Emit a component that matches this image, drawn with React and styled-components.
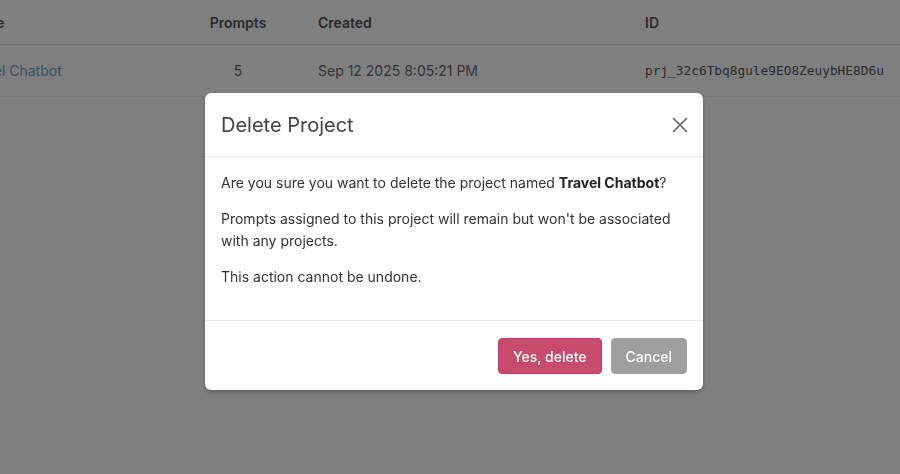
import React from "react";
import styled, { createGlobalStyle } from "styled-components";

const Global = createGlobalStyle`
  html, body { margin: 0; padding: 0; background: #fff; }
  body { font-family: Inter, "Noto Sans", sans-serif; overflow: hidden; }
`;

const Page = styled.div`
  width: 900px;
  height: 474px;
  overflow: hidden;
`;

const Table = styled.div`
  display: grid;
  grid-template-columns: 217px 136px 327px 300px;
  margin-left: -47px;
  width: 980px;
`;

const HeadCell = styled.div`
  padding: 0 12px;
  height: 44px;
  display: flex;
  align-items: center;
  justify-content: ${(p) => (p.$center ? "center" : "flex-start")};
  font-size: 14px;
  font-weight: 600;
  color: #555;
  border-bottom: 1px solid #eee;
`;

const Cell = styled.div`
  padding: 0 12px;
  height: 51px;
  display: flex;
  align-items: center;
  justify-content: ${(p) => (p.$center ? "center" : "flex-start")};
  font-size: 14px;
  color: ${(p) => (p.$link ? "#6f9fcf" : "#6a6a6a")};
  font-family: ${(p) => (p.$mono ? '"DejaVu Sans Mono", monospace' : "inherit")};
  ${(p) => p.$mono && "font-size: 12.8px; color: #555;"}
  border-bottom: 1px solid #eee;
  white-space: nowrap;
`;

const Overlay = styled.div`
  position: fixed;
  inset: 0;
  background: rgba(0, 0, 0, 0.5);
  display: flex;
  justify-content: center;
  align-items: flex-start;
  padding: 93px 0 0 8px;
`;

const Modal = styled.div`
  width: 498px;
  background: #fff;
  border-radius: 6px;
  box-shadow: 0 2px 4px rgba(0, 0, 0, 0.25);
  display: flex;
  flex-direction: column;
`;

const Header = styled.div`
  display: flex;
  align-items: center;
  justify-content: space-between;
  padding: 0 13px 0 16px;
  height: 63px;
  border-bottom: 1px solid #e8e8e8;
`;

const Title = styled.h2`
  margin: 0;
  font-size: 20px;
  font-weight: 400;
  color: #444;
`;

const Close = styled.button`
  border: 0;
  background: none;
  padding: 0;
  width: 20px;
  height: 20px;
  display: flex;
  align-items: center;
  justify-content: center;
  cursor: pointer;
`;

const Body = styled.div`
  padding: 15px 16px 18px;
  border-bottom: 1px solid #e8e8e8;
`;

const Para = styled.p`
  margin: 0 0 14px;
  font-size: 14px;
  line-height: 22px;
  color: #333;
  strong { font-weight: 700; color: #222; }
`;

const Footer = styled.div`
  display: flex;
  justify-content: flex-end;
  gap: 9px;
  padding: 17px 16px 16px;
`;

const Button = styled.button`
  height: 36px;
  padding: 0 14px;
  border-radius: 4px;
  border: 1px solid ${(p) => (p.$danger ? "#bd3f63" : "#9e9e9e")};
  background: ${(p) => (p.$danger ? "#c84b6e" : "#9e9e9e")};
  color: #fff;
  font-family: Inter, sans-serif;
  font-size: 14px;
  font-weight: 500;
  cursor: pointer;
`;

export default function App() {
  return (
    <>
      <Global />
      <Page>
        <Table>
          <HeadCell>Name</HeadCell>
          <HeadCell $center>Prompts</HeadCell>
          <HeadCell>Created</HeadCell>
          <HeadCell>ID</HeadCell>
          <Cell $link>Travel Chatbot</Cell>
          <Cell $center>5</Cell>
          <Cell>Sep 12 2025 8:05:21 PM</Cell>
          <Cell $mono>prj_32c6Tbq8gule9EO8ZeuybHE8D6u</Cell>
        </Table>
      </Page>
      <Overlay>
        <Modal>
          <Header>
            <Title>Delete Project</Title>
            <Close aria-label="Close">
              <svg width="16" height="16" viewBox="0 0 16 16">
                <path d="M1.5 1.5 L14.5 14.5 M14.5 1.5 L1.5 14.5" stroke="#666" strokeWidth="1.7" strokeLinecap="round" />
              </svg>
            </Close>
          </Header>
          <Body>
            <Para>
              Are you sure you want to delete the project named <strong>Travel Chatbot</strong>?
            </Para>
            <Para>
              Prompts assigned to this project will remain but won't be associated with any projects.
            </Para>
            <Para>This action cannot be undone.</Para>
          </Body>
          <Footer>
            <Button $danger>Yes, delete</Button>
            <Button>Cancel</Button>
          </Footer>
        </Modal>
      </Overlay>
    </>
  );
}
